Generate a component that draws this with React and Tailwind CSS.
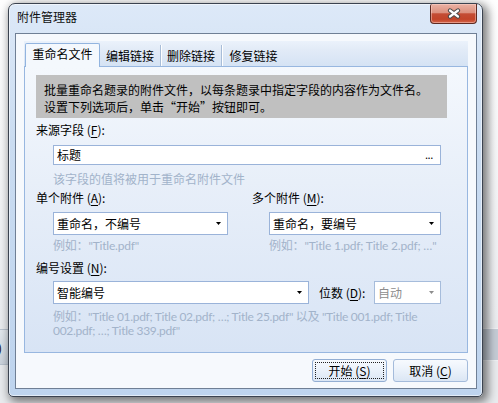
import React from "react";

const U = ({ children }) => <span className="underline underline-offset-[2px]">{children}</span>;

const Arrow = ({ color = "#000" }) => (
  <svg width="5" height="3" viewBox="0 0 5 3" className="shrink-0">
    <polygon points="0,0 5,0 2.5,3" fill={color} />
  </svg>
);

export default function App() {
  return (
    <div className="relative w-[498px] h-[403px] overflow-hidden bg-[#e9ebee] font-['Noto_Sans_CJK_SC','Noto_Sans',sans-serif] text-[12px] text-black">
      {/* desktop behind */}
      <div className="absolute left-0 top-0 w-[498px] h-[320px] bg-[linear-gradient(180deg,#ffffff,#eceef1)]" />
      <div className="absolute left-0 top-[329px] w-[30px] h-[36px] border-y border-[#b9c3cf] bg-[linear-gradient(180deg,#e3e8ee,#cbd3dd)]">
        <span className="absolute left-[-2px] top-[10px] leading-[16px]">)</span>
      </div>
      <div className="absolute right-0 top-[328px] w-[40px] h-[33px] border-y border-[#f0f2f5] bg-[#c5ccd6]" />

      {/* window */}
      <div className="absolute left-[8px] top-[3px] w-[475px] h-[394px] rounded-t-[7px] rounded-b-[5px] border border-[#3b4350] bg-[linear-gradient(180deg,#dde9f8_0%,#cadcf1_35%,#bed4ee_100%)] shadow-[3px_3px_10px_2px_rgba(0,0,0,0.5),inset_0_0_0_1px_rgba(255,255,255,0.55)] pl-[6px] pr-[5px] flex flex-col">
        <div className="h-[29px] pl-[2px] pt-[5px] leading-[16px] text-[#101010]">附件管理器</div>

        {/* close button */}
        <div className="absolute right-[5px] top-0 w-[47px] h-[20px] rounded-b-[4px] rounded-tl-[2px] border border-t-0 border-[#5e2a22] bg-[linear-gradient(180deg,#ebb2a4_0%,#dc917f_45%,#c44d35_52%,#c24429_80%,#d5654a_100%)] shadow-[inset_0_0_0_1px_rgba(255,220,210,0.45)] flex items-center justify-center">
          <svg width="14" height="11" viewBox="0 0 14 11">
            <path d="M3 2.5 L11 8.5 M11 2.5 L3 8.5" stroke="#4a4a4a" strokeWidth="4.2" strokeLinecap="round" />
            <path d="M3 2.5 L11 8.5 M11 2.5 L3 8.5" stroke="#ffffff" strokeWidth="2.2" strokeLinecap="round" />
          </svg>
        </div>

        {/* client area */}
        <div className="w-[462px] h-[356px] border border-[#6f7f95] bg-[#f6f9fd] flex flex-col">
          {/* tab control */}
          <div className="ml-[8px] mt-[7px] w-[444px] flex flex-col">
            <div className="h-[25px] flex items-end bg-[linear-gradient(180deg,#ebf2fb_0%,#e2ebf7_35%,#d5e3f4_100%)]">
              <div className="relative z-10 -mb-px ml-px w-[75px] h-[24px] rounded-t-[2px] border border-b-0 border-[#92b4df] bg-[#f4f8fd] pt-[2px] leading-[16px] text-center">
                重命名文件
              </div>
              <div className="w-[61px] h-[21px] flex items-center justify-center border-r border-[#a8bdd8] shadow-[1px_0_0_#ffffff]">编辑链接</div>
              <div className="w-[61px] h-[21px] flex items-center justify-center border-r border-[#a8bdd8] shadow-[1px_0_0_#ffffff]">删除链接</div>
              <div className="w-[63px] h-[21px] flex items-center justify-center">修复链接</div>
            </div>
            <div className="h-[287px] border border-[#98b7e0] bg-[linear-gradient(180deg,#f4f8fd_0%,#e8eff9_40%,#d8e4f5_100%)] pl-[11px] pt-[8px] flex flex-col">
              <div className="w-[411px] h-[43px] bg-[#c0c0c0] pl-[8px] pt-[6px] leading-[17px]">
                <div className="whitespace-nowrap">批量重命名题录的附件文件，以每条题录中指定字段的内容作为文件名。</div>
                <div className="whitespace-nowrap">设置下列选项后，单击“开始”按钮即可。</div>
              </div>

              <div className="mt-[4px] leading-[16px]">来源字段 (<U>F</U>):</div>
              <div className="mt-[7px] ml-[17px] w-[388px] h-[20px] border border-[#9ab3d9] bg-white flex items-center justify-between pl-[3px] pr-[7px] leading-[16px]">
                <span>标题</span>
                <span className="font-['Lato',sans-serif] text-[11px]">...</span>
              </div>
              <div className="mt-[6px] ml-[17px] leading-[16px] text-[#a2b3ca]">该字段的值将被用于重命名附件文件</div>

              <div className="flex">
                <div className="w-[216px] flex flex-col">
                  <div className="mt-[3px] leading-[16px]">单个附件 (<U>A</U>):</div>
                  <div className="mt-[6px] ml-[17px] w-[175px] h-[23px] border border-[#9ab3d9] bg-white flex items-center justify-between pl-[3px] pr-[6px] leading-[16px]">
                    <span>重命名，不编号</span>
                    <Arrow />
                  </div>
                  <div className="mt-[3px] ml-[17px] leading-[16px] text-[#a2b3ca] whitespace-nowrap font-['Lato','Noto_Sans_CJK_SC',sans-serif] tracking-[-0.2px]">例如："Title.pdf"</div>
                </div>
                <div className="w-[200px] flex flex-col">
                  <div className="mt-[3px] leading-[16px]">多个附件 (<U>M</U>):</div>
                  <div className="mt-[6px] ml-[17px] w-[172px] h-[23px] border border-[#9ab3d9] bg-white flex items-center justify-between pl-[3px] pr-[6px] leading-[16px]">
                    <span>重命名，要编号</span>
                    <Arrow />
                  </div>
                  <div className="mt-[3px] ml-[17px] leading-[16px] text-[#a2b3ca] whitespace-nowrap font-['Lato','Noto_Sans_CJK_SC',sans-serif] tracking-[-0.2px]">例如："Title 1.pdf; Title 2.pdf; …"</div>
                </div>
              </div>

              <div className="mt-[6px] leading-[16px]">编号设置 (<U>N</U>):</div>
              <div className="mt-[5px] ml-[17px] flex items-center">
                <div className="w-[256px] h-[23px] border border-[#9ab3d9] bg-white flex items-center justify-between pl-[3px] pr-[6px] leading-[16px]">
                  <span>智能编号</span>
                  <Arrow />
                </div>
                <span className="ml-[10px] w-[55px] leading-[16px] whitespace-nowrap">位数 (<U>D</U>):</span>
                <div className="w-[67px] h-[23px] border border-[#a6bcdb] bg-white flex items-center justify-between pl-[3px] pr-[6px] leading-[16px] text-[#8d8d8d]">
                  <span>自动</span>
                  <Arrow color="#8d8d8d" />
                </div>
              </div>
              <div className="mt-[6px] ml-[17px] leading-[14px] text-[#a2b3ca] font-['Lato','Noto_Sans_CJK_SC',sans-serif] tracking-[-0.3px]">
                <div className="whitespace-nowrap">例如："Title 01.pdf; Title 02.pdf; …; Title 25.pdf" 以及 "Title 001.pdf; Title</div>
                <div className="whitespace-nowrap">002.pdf; …; Title 339.pdf"</div>
              </div>
            </div>
          </div>

          {/* buttons */}
          <div className="mt-[6px] pr-[8px] flex justify-end gap-[6px]">
            <div className="relative w-[75px] h-[23px] rounded-[3px] border border-[#93aed3] bg-[linear-gradient(180deg,#f7fafe_0%,#eaf1fa_50%,#dbe6f4_100%)] flex items-center justify-center leading-[16px]">
              <span className="absolute inset-[2px] border border-dotted border-[#222]" />
              开始 (<U>S</U>)
            </div>
            <div className="w-[75px] h-[23px] rounded-[3px] border border-[#a4bbdb] bg-[linear-gradient(180deg,#f7fafe_0%,#eaf1fa_50%,#dbe6f4_100%)] flex items-center justify-center leading-[16px]">
              取消 (<U>C</U>)
            </div>
          </div>
        </div>
      </div>
    </div>
  );
}
